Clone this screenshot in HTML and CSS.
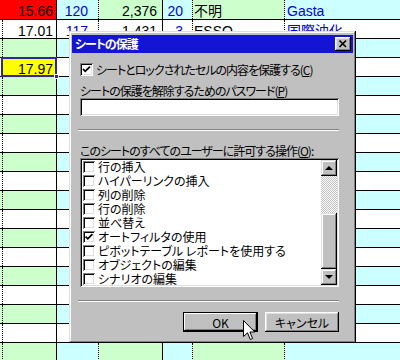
FILE: index.html
```html
<!DOCTYPE html>
<html lang="ja">
<head>
    <meta charset="UTF-8">
    <meta name="viewport" content="width=device-width, initial-scale=1.0">
    <title>シートの保護</title>
    <link rel="stylesheet" href="styles.css">
</head>
<body>

    <div class="sheet">
        <div class="sheet__row sheet__row--first sheet__row--tint">
            <div class="cell cell--edge cell--red"></div>
            <div class="cell cell--a cell--red">15.66</div>
            <div class="cell cell--b blue">120</div>
            <div class="cell cell--c">2,376</div>
            <div class="cell cell--d blue">20</div>
            <div class="cell cell--e">不明</div>
            <div class="cell cell--f blue">Gasta</div>
        </div>
        <div class="sheet__row">
            <div class="cell cell--edge"></div>
            <div class="cell cell--a">17.01</div>
            <div class="cell cell--b blue">117</div>
            <div class="cell cell--c">1,431</div>
            <div class="cell cell--d blue">3</div>
            <div class="cell cell--e">ESSO</div>
            <div class="cell cell--f blue">国際油化</div>
        </div>
        <div class="sheet__row sheet__row--tint">
            <div class="cell cell--edge"></div><div class="cell cell--a"></div><div class="cell cell--b"></div><div class="cell cell--c"></div><div class="cell cell--d"></div><div class="cell cell--e"></div><div class="cell cell--f"></div>
        </div>
        <div class="sheet__row">
            <div class="cell cell--edge"></div>
            <div class="cell cell--a cell--selected">17.97</div>
            <div class="cell cell--b"></div><div class="cell cell--c"></div><div class="cell cell--d"></div><div class="cell cell--e"></div><div class="cell cell--f"></div>
        </div>
        <div class="sheet__row sheet__row--tint">
            <div class="cell cell--edge"></div><div class="cell cell--a"></div><div class="cell cell--b"></div><div class="cell cell--c"></div><div class="cell cell--d"></div><div class="cell cell--e"></div><div class="cell cell--f"></div>
        </div>
        <div class="sheet__row">
            <div class="cell cell--edge"></div><div class="cell cell--a"></div><div class="cell cell--b"></div><div class="cell cell--c"></div><div class="cell cell--d"></div><div class="cell cell--e"></div><div class="cell cell--f"></div>
        </div>
        <div class="sheet__row sheet__row--tint">
            <div class="cell cell--edge"></div><div class="cell cell--a"></div><div class="cell cell--b"></div><div class="cell cell--c"></div><div class="cell cell--d"></div><div class="cell cell--e"></div><div class="cell cell--f"></div>
        </div>
        <div class="sheet__row">
            <div class="cell cell--edge"></div><div class="cell cell--a"></div><div class="cell cell--b"></div><div class="cell cell--c"></div><div class="cell cell--d"></div><div class="cell cell--e"></div><div class="cell cell--f"></div>
        </div>
        <div class="sheet__row sheet__row--tint">
            <div class="cell cell--edge"></div><div class="cell cell--a"></div><div class="cell cell--b"></div><div class="cell cell--c"></div><div class="cell cell--d"></div><div class="cell cell--e"></div><div class="cell cell--f"></div>
        </div>
        <div class="sheet__row">
            <div class="cell cell--edge"></div><div class="cell cell--a"></div><div class="cell cell--b"></div><div class="cell cell--c"></div><div class="cell cell--d"></div><div class="cell cell--e"></div><div class="cell cell--f"></div>
        </div>
        <div class="sheet__row sheet__row--tint">
            <div class="cell cell--edge"></div><div class="cell cell--a"></div><div class="cell cell--b"></div><div class="cell cell--c"></div><div class="cell cell--d"></div><div class="cell cell--e"></div><div class="cell cell--f"></div>
        </div>
        <div class="sheet__row">
            <div class="cell cell--edge"></div><div class="cell cell--a"></div><div class="cell cell--b"></div><div class="cell cell--c"></div><div class="cell cell--d"></div><div class="cell cell--e"></div><div class="cell cell--f"></div>
        </div>
        <div class="sheet__row sheet__row--tint">
            <div class="cell cell--edge"></div><div class="cell cell--a"></div><div class="cell cell--b"></div><div class="cell cell--c"></div><div class="cell cell--d"></div><div class="cell cell--e"></div><div class="cell cell--f"></div>
        </div>
        <div class="sheet__row">
            <div class="cell cell--edge"></div><div class="cell cell--a"></div><div class="cell cell--b"></div><div class="cell cell--c"></div><div class="cell cell--d"></div><div class="cell cell--e"></div><div class="cell cell--f"></div>
        </div>
        <div class="sheet__row sheet__row--tint">
            <div class="cell cell--edge"></div><div class="cell cell--a"></div><div class="cell cell--b"></div><div class="cell cell--c"></div><div class="cell cell--d"></div><div class="cell cell--e"></div><div class="cell cell--f"></div>
        </div>
        <div class="sheet__row">
            <div class="cell cell--edge"></div><div class="cell cell--a"></div><div class="cell cell--b"></div><div class="cell cell--c"></div><div class="cell cell--d"></div><div class="cell cell--e"></div><div class="cell cell--f"></div>
        </div>
        <div class="sheet__row sheet__row--tint">
            <div class="cell cell--edge"></div><div class="cell cell--a"></div><div class="cell cell--b"></div><div class="cell cell--c"></div><div class="cell cell--d"></div><div class="cell cell--e"></div><div class="cell cell--f"></div>
        </div>
        <div class="sheet__row">
            <div class="cell cell--edge"></div><div class="cell cell--a"></div><div class="cell cell--b"></div><div class="cell cell--c"></div><div class="cell cell--d"></div><div class="cell cell--e"></div><div class="cell cell--f"></div>
        </div>
        <div class="sheet__row sheet__row--tint">
            <div class="cell cell--edge"></div><div class="cell cell--a"></div><div class="cell cell--b"></div><div class="cell cell--c"></div><div class="cell cell--d"></div><div class="cell cell--e"></div><div class="cell cell--f"></div>
        </div>
    </div>

    <!-- ダイアログ -->
    <div class="dialog">
        <div class="dialog__title">
            <span>シートの保護</span>
            <div class="dialog__close">
                <svg width="16" height="14" viewBox="0 0 16 14">
                    <path d="M4.5 3.5 L11 10 M11 3.5 L4.5 10" stroke="#000" stroke-width="1.7" fill="none"/>
                </svg>
            </div>
        </div>

        <div class="dialog__body">
            <label class="check-row">
                <span class="checkbox">
                    <svg width="13" height="13" viewBox="0 0 13 13">
                        <path d="M3 6 L5.2 8.3 L10 3.6" stroke="#000" stroke-width="1.8" fill="none"/>
                    </svg>
                </span>
                <span>シートとロックされたセルの内容を保護する(<u>C</u>)</span>
            </label>

            <div class="dialog__label dialog__label--password">シートの保護を解除するためのパスワード(<u>P</u>)</div>
            <div class="text-input"></div>

            <div class="separator"></div>

            <div class="dialog__label dialog__label--list">このシートのすべてのユーザーに許可する操作(<u>O</u>):</div>
            <div class="listbox">
                <div class="listbox__items">
                    <div class="listbox__item"><span class="checkbox checkbox--small"></span>行の挿入</div>
                    <div class="listbox__item"><span class="checkbox checkbox--small"></span>ハイパーリンクの挿入</div>
                    <div class="listbox__item"><span class="checkbox checkbox--small"></span>列の削除</div>
                    <div class="listbox__item"><span class="checkbox checkbox--small"></span>行の削除</div>
                    <div class="listbox__item"><span class="checkbox checkbox--small"></span>並べ替え</div>
                    <div class="listbox__item">
                        <span class="checkbox checkbox--small">
                            <svg width="12" height="12" viewBox="0 0 12 12">
                                <path d="M2.6 5.6 L4.8 7.8 L9.4 3.2" stroke="#000" stroke-width="1.8" fill="none"/>
                            </svg>
                        </span>オートフィルタの使用
                    </div>
                    <div class="listbox__item"><span class="checkbox checkbox--small"></span>ピボットテーブル レポートを使用する</div>
                    <div class="listbox__item"><span class="checkbox checkbox--small"></span>オブジェクトの編集</div>
                    <div class="listbox__item"><span class="checkbox checkbox--small"></span>シナリオの編集</div>
                </div>
                <div class="scrollbar">
                    <div class="scrollbar__button">
                        <svg width="16" height="16" viewBox="0 0 16 16"><path d="M4 10 L8 6 L12 10 Z" fill="#000"/></svg>
                    </div>
                    <div class="scrollbar__track"></div>
                    <div class="scrollbar__thumb"></div>
                    <div class="scrollbar__button">
                        <svg width="16" height="16" viewBox="0 0 16 16"><path d="M4 6 L8 10 L12 6 Z" fill="#000"/></svg>
                    </div>
                </div>
            </div>

            <div class="separator separator--bottom"></div>

            <div class="dialog__buttons">
                <div class="button button--default">OK</div>
                <div class="button">キャンセル</div>
            </div>
        </div>
    </div>

    <svg class="cursor" width="13" height="21" viewBox="0 0 13 21">
        <path d="M0.5 0.5 V16.5 L4.5 12.8 L7.3 19.5 L9.6 18.5 L6.9 12 H11.8 Z" fill="#fff" stroke="#000" stroke-linejoin="miter"/>
    </svg>

</body>
</html>
```

FILE: styles.css
```css
body {
    margin: 0;
    width: 400px;
    height: 360px;
    overflow: hidden;
    position: relative;
    background-color: #fff;
    font-family: 'Liberation Sans', 'Noto Sans CJK JP', sans-serif;
}

/* シート */
.sheet {
    display: flex;
    flex-direction: column;
}

.sheet__row {
    display: flex;
    height: 19px;
    box-sizing: border-box;
    border-bottom: 1px solid #000;
}

.sheet__row--first {
    height: 20px;
}

.cell {
    box-sizing: border-box;
    height: 100%;
    padding-top: 2px;
    font-size: 14px;
    line-height: 18px;
    white-space: nowrap;
    overflow: hidden;
    color: #000;
    border-right: 1px dotted #000;
}

.cell--edge { width: 3px; }
.cell--a { width: 54px; text-align: right; padding-right: 3px; border-right-style: solid; }
.cell--b { width: 42px; text-align: right; padding-right: 10px; }
.cell--c { width: 64px; text-align: right; padding-right: 5px; border-right-style: solid; }
.cell--d { width: 30px; text-align: right; padding-right: 9px; }
.cell--e { width: 92px; padding-left: 1px; }
.cell--f { flex: 1; padding-left: 2px; border-right: none; }

.sheet__row--tint .cell--edge,
.sheet__row--tint .cell--a,
.sheet__row--tint .cell--c,
.sheet__row--tint .cell--e {
    background-color: #ccffcc;
}

.sheet__row--tint .cell--b,
.sheet__row--tint .cell--d,
.sheet__row--tint .cell--f {
    background-color: #ccffff;
}

.sheet__row .cell--red {
    background-color: #ff0000;
    border-right-color: #ff0000;
}

.sheet__row .cell--a.cell--red {
    border-right-color: #000;
}

.blue {
    color: #0000e0;
}

.cell--selected {
    position: relative;
    overflow: visible;
    background-color: #ffff00;
}

/* 選択枠 */
.cell--selected::after {
    content: '';
    position: absolute;
    left: -2px;
    top: -1px;
    right: -1px;
    bottom: -1px;
    border: 2px solid #2a2a9a;
}

.cell--selected::before {
    content: '';
    position: absolute;
    right: -3px;
    bottom: -3px;
    width: 3px;
    height: 3px;
    background-color: #2a2a9a;
    border: 1px solid #fff;
    z-index: 1;
}

/* ダイアログ */
.dialog {
    position: absolute;
    left: 69px;
    top: 31px;
    width: 287px;
    height: 312px;
    box-sizing: border-box;
    padding: 4px 3px 3px 3px;
    background-color: #c0c0c0;
    box-shadow: inset -1px -1px #000, inset 1px 1px #dfdfdf, inset -2px -2px #808080, inset 2px 2px #fff;
    font-family: 'Noto Sans CJK JP', sans-serif;
    font-size: 12px;
    font-feature-settings: "palt";
    color: #000;
}

.dialog__title {
    display: flex;
    align-items: center;
    justify-content: space-between;
    height: 18px;
    padding: 0 2px 0 3px;
    background-color: #1414d4;
    color: #fff;
    font-weight: bold;
    letter-spacing: -1px;
    line-height: 18px;
}

.dialog__close {
    width: 16px;
    height: 14px;
    background-color: #c0c0c0;
    box-shadow: inset -1px -1px #000, inset 1px 1px #fff, inset -2px -2px #808080, inset 2px 2px #dfdfdf;
}

.dialog__close svg {
    display: block;
}

.dialog__body {
    display: flex;
    flex-direction: column;
    width: 259px;
    padding: 10px 0 0 8px;
}

.check-row {
    display: flex;
    align-items: center;
    gap: 3px;
    height: 13px;
    line-height: 13px;
    letter-spacing: -1px;
    white-space: nowrap;
}

.checkbox {
    flex: none;
    width: 13px;
    height: 13px;
    background-color: #fff;
    box-shadow: inset 1px 1px #808080, inset -1px -1px #fff, inset 2px 2px #000, inset -2px -2px #dfdfdf;
}

.checkbox svg {
    display: block;
}

.checkbox--small {
    width: 12px;
    height: 12px;
}

.dialog__label {
    height: 14px;
    line-height: 14px;
    letter-spacing: -1px;
    white-space: nowrap;
}

.dialog__label--password {
    margin-top: 8px;
}

.dialog__label--list {
    margin-top: 13px;
}

.text-input {
    height: 18px;
    background-color: #fff;
    box-shadow: inset 1px 1px #808080, inset -1px -1px #fff, inset 2px 2px #000, inset -2px -2px #dfdfdf;
}

.separator {
    height: 0;
    width: 261px;
    margin: 13px 0 0 -2px;
    border-top: 1px solid #808080;
    border-bottom: 1px solid #fff;
}

/* リストボックス */
.listbox {
    display: flex;
    height: 129px;
    box-sizing: border-box;
    padding: 2px;
    background-color: #fff;
    box-shadow: inset 1px 1px #808080, inset -1px -1px #fff, inset 2px 2px #000, inset -2px -2px #dfdfdf;
}

.listbox__items {
    flex: 1;
    padding: 0 0 0 1px;
    overflow: hidden;
}

.listbox__item {
    display: flex;
    align-items: center;
    gap: 3px;
    height: 14px;
    line-height: 14px;
    white-space: nowrap;
}

.scrollbar {
    display: flex;
    flex-direction: column;
    width: 16px;
}

.scrollbar__button,
.scrollbar__thumb {
    background-color: #c0c0c0;
    box-shadow: inset -1px -1px #000, inset 1px 1px #dfdfdf, inset -2px -2px #808080, inset 2px 2px #fff;
}

.scrollbar__button {
    height: 16px;
}

.scrollbar__button svg {
    display: block;
}

.scrollbar__track {
    height: 37px;
    background-image: repeating-conic-gradient(#c0c0c0 0 25%, #fff 0 50%);
    background-size: 2px 2px;
}

.scrollbar__thumb {
    flex: 1;
}

.separator--bottom {
    margin-top: 13px;
}

.dialog__buttons {
    display: flex;
    justify-content: flex-end;
    gap: 7px;
    margin-top: 10px;
}

.button {
    display: flex;
    align-items: center;
    justify-content: center;
    width: 74px;
    height: 20px;
    box-sizing: border-box;
    background-color: #c0c0c0;
    box-shadow: inset -1px -1px #000, inset 1px 1px #fff, inset -2px -2px #808080, inset 2px 2px #dfdfdf;
}

.button--default {
    width: 75px;
    border: 1px solid #000;
    box-shadow: inset -1px -1px #000, inset 1px 1px #fff, inset -2px -2px #808080;
}

.cursor {
    position: absolute;
    left: 243px;
    top: 320px;
}
```
